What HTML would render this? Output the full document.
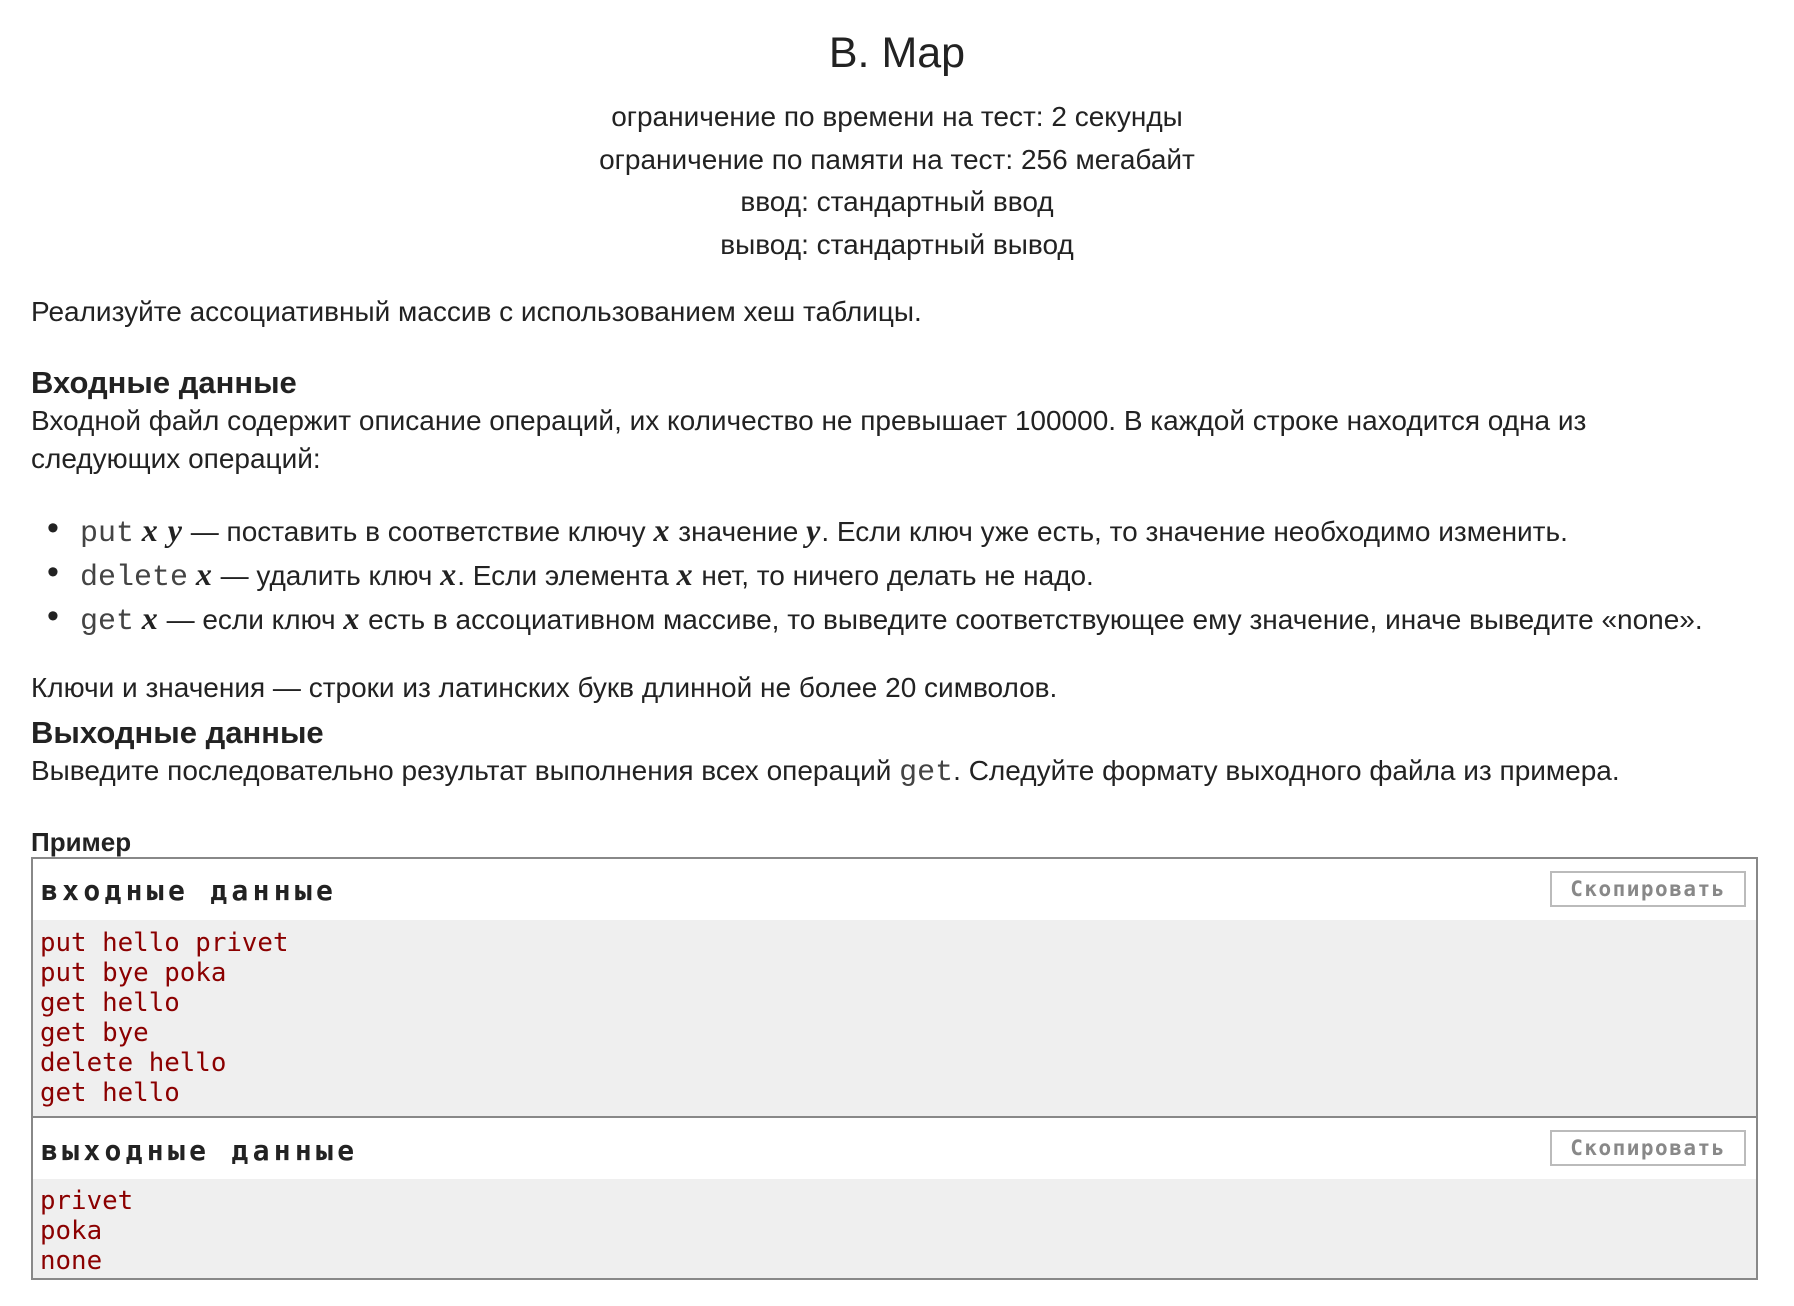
<!DOCTYPE html>
<html><head><meta charset="utf-8"><style>
body{margin:0;width:1794px;height:1306px;background:#fff;color:#222;font-family:"Liberation Sans",Arial,sans-serif;position:relative;overflow:hidden}
.a{position:absolute;white-space:nowrap;line-height:1}
.c{left:0;width:1794px;text-align:center;font-size:28px}
.t{font-size:28px;left:31px}
.h{font-size:31px;font-weight:bold;left:31px}
.m{font-family:"Liberation Mono",monospace;color:#444;font-size:30px}
.v{font-family:"Liberation Serif",serif;font-style:italic;font-weight:bold;font-size:32px;letter-spacing:1px}
.box{position:absolute;left:31px;top:857px;width:1727px;height:423px;border:2px solid #888;box-sizing:border-box}
.hd{position:absolute;left:0;right:0;background:#fff;border-bottom:2px solid #888}
.hd span{position:absolute;left:8px;font-family:"DejaVu Sans Mono","Liberation Mono",monospace;font-weight:bold;font-size:28px;letter-spacing:4.3px;color:#222}
.btn{position:absolute;right:10px;width:196px;height:36px;border:2px solid #bbb;box-sizing:border-box;font-family:"DejaVu Sans Mono",monospace;font-size:21px;font-weight:bold;color:#888;text-align:center;line-height:32px;letter-spacing:1.5px}
.code{position:absolute;left:0;right:0;background:#efefef;font-family:"DejaVu Sans Mono","Liberation Mono",monospace;font-size:25.8px;color:#8b0000;line-height:30px;padding-left:7px;white-space:pre}
.b{font-size:34px}
</style></head><body>
<div class="a c" style="top:32px;font-size:43px">B. Map</div>
<div class="a c" style="top:103px">ограничение по времени на тест: 2 секунды</div>
<div class="a c" style="top:146px">ограничение по памяти на тест: 256 мегабайт</div>
<div class="a c" style="top:188px">ввод: стандартный ввод</div>
<div class="a c" style="top:231px">вывод: стандартный вывод</div>
<div class="a t" style="top:298px">Реализуйте ассоциативный массив с использованием хеш таблицы.</div>
<div class="a h" style="top:367px">Входные данные</div>
<div class="a t" style="top:407px">Входной файл содержит описание операций, их количество не превышает 100000. В каждой строке находится одна из</div>
<div class="a t" style="top:445px">следующих операций:</div>
<div class="a t b" style="top:511px;left:47px">•</div>
<div class="a t" style="top:514px;left:80px"><span class="m">put</span> <span class="v">x y</span> — поставить в соответствие ключу <span class="v">x</span> значение <span class="v">y</span>. Если ключ уже есть, то значение необходимо изменить.</div>
<div class="a t b" style="top:555px;left:47px">•</div>
<div class="a t" style="top:558px;left:80px"><span class="m">delete</span> <span class="v">x</span> — удалить ключ <span class="v">x</span>. Если элемента <span class="v">x</span> нет, то ничего делать не надо.</div>
<div class="a t b" style="top:599px;left:47px">•</div>
<div class="a t" style="top:602px;left:80px"><span class="m">get</span> <span class="v">x</span> — если ключ <span class="v">x</span> есть в ассоциативном массиве, то выведите соответствующее ему значение, иначе выведите «none».</div>
<div class="a t" style="top:674px">Ключи и значения — строки из латинских букв длинной не более 20 символов.</div>
<div class="a h" style="top:717px">Выходные данные</div>
<div class="a t" style="top:757px">Выведите последовательно результат выполнения всех операций <span class="m">get</span>. Следуйте формату выходного файла из примера.</div>
<div class="a t" style="top:829px;font-weight:bold;font-size:26px">Пример</div>
<div class="box">
 <div class="hd" style="top:0;height:61px"><span style="top:15px">входные данные</span><div class="btn" style="top:12px">Скопировать</div></div>
 <div class="code" style="top:61px;height:198px;padding-top:8px;box-sizing:border-box;border-bottom:2px solid #888">put hello privet
put bye poka
get hello
get bye
delete hello
get hello</div>
 <div class="hd" style="top:259px;height:61px"><span style="top:16px">выходные данные</span><div class="btn" style="top:12px">Скопировать</div></div>
 <div class="code" style="top:320px;bottom:0;padding-top:7px">privet
poka
none</div>
</div>
</body></html>
